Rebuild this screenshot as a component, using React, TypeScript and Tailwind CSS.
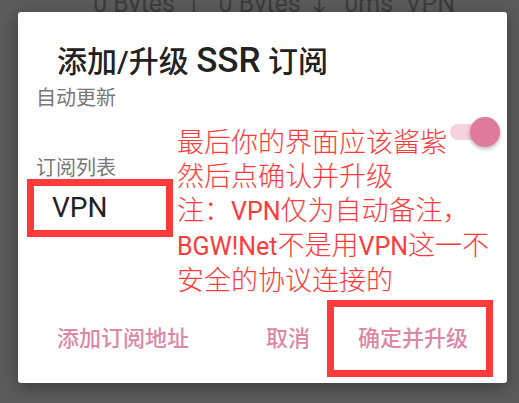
const font = "font-['Roboto','Noto_Sans_CJK_SC',sans-serif]";

const Toggle = () => {
    return (
        <div className="relative mt-[37px] mr-[7px] flex h-[30px] w-[50px] items-center">
            <div className="h-[16px] w-[50px] rounded-full bg-[#f6d2de]" />
            <div className="absolute right-0 top-0 h-[30px] w-[30px] rounded-full bg-[#df7a9c] shadow-[0_2px_4px_rgba(0,0,0,0.3)]" />
        </div>
    )
}

const AnnotationText = () => {
    return (
        <div className="ml-[7px] mt-[46px] w-[260px] shrink-0 whitespace-nowrap text-[27px] font-light leading-[34px] text-[#ff3a3a]">
            <div>最后你的界面应该酱紫</div>
            <div>然后点确认并升级</div>
            <div>注：<span className="text-[25px] font-normal">VPN</span>仅为自动备注，</div>
            <div><span className="text-[25px] font-normal">BGW!Net</span>不是用<span className="text-[25px] font-normal">VPN</span>这一不</div>
            <div>安全的协议连接的</div>
        </div>
    )
}

const SubscriptionDialog = () => {
    return (
        <div className="absolute left-[18px] top-[12px] flex h-[371px] w-[489px] flex-col rounded-[3px] bg-white shadow-[0_4px_16px_rgba(0,0,0,0.35)]">
            <h2 className="pl-[39px] pt-[30px] text-[30px] font-medium leading-[37px] text-[#222]">
                添加/升级 <span className="text-[35px]">SSR</span> 订阅
            </h2>
            <div className="flex items-start">
                <div className="w-[152px] shrink-0 pl-[9px]">
                    <div className="mt-[4px] pl-[9px] text-[20px] leading-[28px] text-[#777]">自动更新</div>
                    <div className="mt-[42px] pl-[9px] text-[20px] leading-[28px] text-[#777]">订阅列表</div>
                    <div className="mt-[-3px] flex h-[58px] w-[146px] items-center border-[7px] border-[#ff3a3a] pl-[18px] text-[28px] text-[#222]">
                        VPN
                    </div>
                </div>
                <AnnotationText />
                <div className="ml-auto">
                    <Toggle />
                </div>
            </div>
            <div className="mt-auto mb-[6px] flex items-center text-[22px] font-medium text-[#db87a8]">
                <button className="pl-[39px]">添加订阅地址</button>
                <button className="ml-auto">取消</button>
                <div className="ml-[17px] mr-[14px] flex h-[77px] w-[166px] items-center justify-center border-[7px] border-[#ff3a3a]">
                    <button className="pl-[6px]">确定并升级</button>
                </div>
            </div>
        </div>
    )
}

export default function App() {
    return (
        <div className={`relative h-[403px] w-full overflow-hidden bg-[#5b5b5b] ${font}`}>
            <div className="mt-[-8px] pl-[93px] text-[25px] leading-[24px] whitespace-pre text-[#3c3c3c]">
                0 Bytes ↑  0 Bytes ↓  0ms  VPN
            </div>
            <SubscriptionDialog />
        </div>
    )
}
